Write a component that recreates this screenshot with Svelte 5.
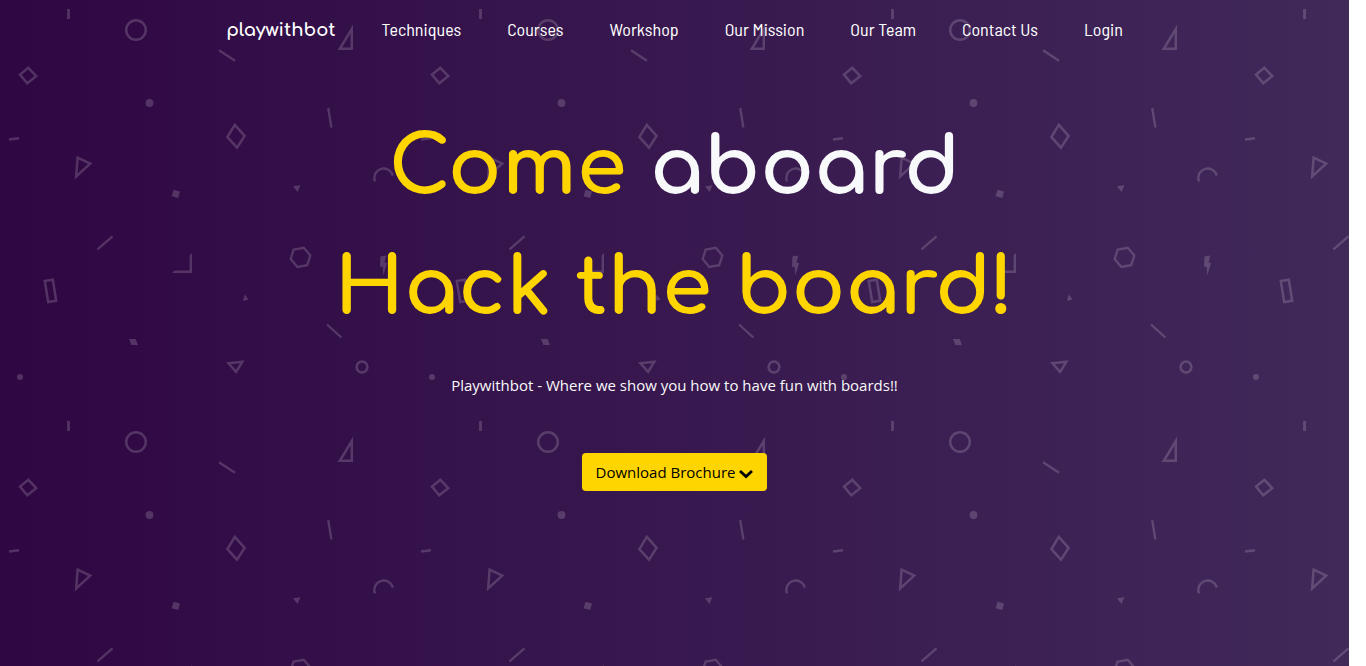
<script>
  const links = ['Techniques', 'Courses', 'Workshop', 'Our Mission', 'Our Team', 'Contact Us', 'Login'];
</script>

<div class="page">
  <svg class="confetti" aria-hidden="true">
    <defs>
      <pattern id="shapes" width="412" height="412" patternUnits="userSpaceOnUse">
        <g fill="none" stroke="#fff" stroke-width="2.5">
          <path d="M68.5 9v10" stroke-width="2.8" />
          <circle cx="136" cy="30" r="9.8" />
          <path d="M28.4 67.8L36.2 76.2L27.3 83.2L20 74.6Z" />
          <path d="M9 139.6L19 138.2" />
          <path d="M77.6 157.7L90.2 163.6L76.2 176.5Z" />
          <path d="M219 50.3L235 60.8" stroke-width="2.3" />
          <path d="M351.8 29V48.8H339.8Z" />
          <path d="M234.8 124.8L244.6 135.9L237 147.6L227.4 137Z" />
          <path d="M328.2 108L331.4 127.5" stroke-width="2.3" />
          <path d="M375 181.5A9.4 9.4 0 1 1 392.8 175.6" stroke-width="2.3" />
          <path d="M97.5 249.3L112.5 236.3" stroke-width="2.3" />
          <path d="M44.8 281.1L52.8 279.8L56.2 300.8L48.2 302Z" />
          <path d="M293.6 249.6L303.8 247.8L310.3 255.5L307.2 265.2L297.3 267L290.7 259Z" stroke-width="2.3" />
          <path d="M327 324.5L341.4 337.5" stroke-width="2.3" />
          <path d="M228.5 363.3L242.3 361.8L236.1 371.8Z" />
          <circle cx="362" cy="367" r="5.4" />
        </g>
        <g fill="#fff">
          <circle cx="149.5" cy="103" r="3.9" />
          <path d="M173.6 189.7L180 191.4L178.2 198L171.6 196.2Z" />
          <path d="M293 186.3L300.4 185.2L297.5 192Z" />
          <path d="M172 273L174.5 270.6H189.6V255.5L192 253V273Z" />
          <path d="M129 339H135.6L138 345H131.4Z" />
          <circle cx="20" cy="377" r="3" />
          <path d="M380.4 256.4L386.2 255.4L384.5 262.8H387.2L383.2 275.5L382.7 266.8H380Z" />
          <path d="M244.6 294.3L248.5 299.6L243.2 301Z" />
        </g>
      </pattern>
    </defs>
    <rect width="100%" height="100%" fill="url(#shapes)" />
  </svg>

  <nav>
    <a class="brand" href="#home">playwithbot</a>
    {#each links as link}
      <a href="#{link.toLowerCase().replace(' ', '-')}">{link}</a>
    {/each}
  </nav>

  <main>
    <h1>
      <span class="line">Come <span class="light">aboard</span></span>
      <span class="line">Hack the board!</span>
    </h1>
    <p>Playwithbot - Where we show you how to have fun with boards!!</p>
    <button type="button">
      Download Brochure
      <svg width="14" height="16" viewBox="0 0 14 16" aria-hidden="true">
        <path d="M1 7L7 12.5L13 7" fill="none" stroke="#000" stroke-width="2.8" />
      </svg>
    </button>
  </main>
</div>

<style>
  :global(body) {
    background: #fff;
  }

  .page {
    position: relative;
    min-height: 100vh;
    margin-right: 17px;
    background: linear-gradient(to right, #2f0743, #41295a);
    color: #f8f9fa;
    font-family: "Segoe UI", "Open Sans", sans-serif;
  }

  .confetti {
    position: absolute;
    inset: 0;
    width: 100%;
    height: 100%;
    opacity: 0.17;
  }

  nav {
    position: relative;
    display: flex;
    justify-content: center;
    align-items: baseline;
    gap: 46px;
    padding: 17px 0;
  }

  nav a {
    color: #fff;
    font: 18px/24px "Barlow Semi Condensed", Roboto, sans-serif;
    text-decoration: none;
    white-space: nowrap;
  }

  nav .brand {
    font: 700 18px/24px Comfortaa, Quicksand, Lato, sans-serif;
  }

  main {
    position: relative;
    display: flex;
    flex-direction: column;
    align-items: center;
    padding-top: 50px;
    text-align: center;
  }

  h1 {
    margin: 0;
    color: #ffd500;
    font: 700 80px/120px Comfortaa, Quicksand, Lato, sans-serif;
  }

  .line {
    display: block;
  }

  .light {
    color: #f8f9fa;
  }

  p {
    margin: 24px 0 56px;
    font-size: 15px;
    line-height: 24px;
  }

  button {
    display: flex;
    align-items: center;
    gap: 4px;
    padding: 7px 14px;
    border: 0;
    border-radius: 4px;
    background: #ffd500;
    color: #000;
    font: 15px/24px "Segoe UI", "Open Sans", sans-serif;
  }
</style>
